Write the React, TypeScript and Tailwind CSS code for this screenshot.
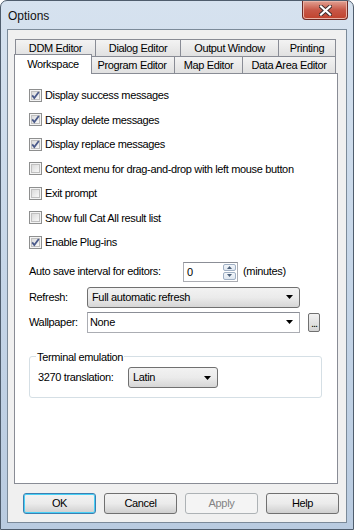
import React from "react";

const txt = "font-['Liberation_Sans',Arial,sans-serif] text-[11px] tracking-[-0.35px] text-black";

function CheckBox({ checked }: { checked: boolean }) {
  return (
    <svg width="13" height="13" viewBox="0 0 13 13" className="shrink-0">
      <defs>
        <linearGradient id="cbg" x1="0" y1="0" x2="1" y2="1">
          <stop offset="0" stopColor="#d9d9d9" />
          <stop offset="1" stopColor="#fafafa" />
        </linearGradient>
      </defs>
      <rect x="0.5" y="0.5" width="12" height="12" fill="#f4f4f4" stroke="#8e8f8f" />
      <rect x="2.5" y="2.5" width="8" height="8" fill="url(#cbg)" stroke="#c0c0c0" />
      {checked && (
        <path d="M3.2 6.4 L5.3 9 L9.8 3" fill="none" stroke="#4a5a8a" strokeWidth="1.8" />
      )}
    </svg>
  );
}

function Check({ label, checked }: { label: string; checked?: boolean }) {
  return (
    <div className="flex items-center h-[24.5px]">
      <CheckBox checked={!!checked} />
      <span className="ml-[3px]">{label}</span>
    </div>
  );
}

function Arrow() {
  return (
    <svg width="7" height="4" viewBox="0 0 7 4" className="shrink-0">
      <path d="M0 0 H7 L3.5 4 Z" fill="#000" />
    </svg>
  );
}

function DropList({ value, className }: { value: string; className: string }) {
  return (
    <div
      className={`flex items-center justify-between rounded-[3px] border border-[#707070] bg-gradient-to-b from-[#f2f2f2] via-[#ebebeb] to-[#d6d6d6] pl-[4px] pr-[6px] ${className}`}
    >
      <span>{value}</span>
      <Arrow />
    </div>
  );
}

function Button({ label, primary, disabled }: { label: string; primary?: boolean; disabled?: boolean }) {
  const border = primary
    ? "border-[#3c7fb1] shadow-[inset_0_0_0_1px_#48d0f6]"
    : disabled
    ? "border-[#adb2b5]"
    : "border-[#707070]";
  const bg = disabled
    ? "bg-[#f4f4f4] text-[#838383]"
    : "bg-gradient-to-b from-[#f2f2f2] via-[#ebebeb] to-[#cfcfcf]";
  return (
    <div
      className={`w-[73px] h-[21px] flex items-center justify-center rounded-[3px] border ${border} ${bg}`}
    >
      {label}
    </div>
  );
}

function Tab({ label, w }: { label: string; w: string }) {
  return (
    <div
      className={`${w} h-[17px] flex items-center justify-center border border-[#898c95] border-b-0 -ml-px first:ml-0 bg-gradient-to-b from-[#f3f3f3] to-[#e1e1e1]`}
    >
      {label}
    </div>
  );
}

export default function App() {
  return (
    <div className={`w-[354px] h-[530px] flex flex-col rounded-t-[7px] border border-[#4f5d6d] bg-gradient-to-b from-[#d6e2ef] via-[#c6d6e8] to-[#b9cbe0] px-[6px] pb-[6px] ${txt}`}>
      {/* title bar */}
      <div className="h-[28px] flex items-start justify-between shrink-0">
        <span className="mt-[6px] ml-[1px] text-[12px] tracking-normal text-[#111]">Options</span>
        <div className="w-[46px] h-[19px] -mr-[1px] flex items-center justify-center rounded-b-[4px] border border-t-0 border-[#6d2a25] bg-gradient-to-b from-[#e0a193] via-[#c75747] to-[#c0412c] shadow-[inset_0_0_0_1px_#eab3a6]">
          <svg width="13" height="11" viewBox="0 0 13 11">
            <path d="M2 1.5 L11 9.5 M11 1.5 L2 9.5" stroke="#3b2b2b" strokeWidth="4" strokeLinecap="square" />
            <path d="M2 1.5 L11 9.5 M11 1.5 L2 9.5" stroke="#fff" strokeWidth="2.2" strokeLinecap="square" />
          </svg>
        </div>
      </div>

      {/* client area */}
      <div className="flex-1 flex flex-col bg-[#f0f0f0] border border-[#7b8a99] px-[6px] pt-[9px] pb-[8px]">
        {/* tabs */}
        <div className="flex ml-[1px]">
          <Tab label="DDM Editor" w="w-[81px]" />
          <Tab label="Dialog Editor" w="w-[86px]" />
          <Tab label="Output Window" w="w-[99px]" />
          <Tab label="Printing" w="w-[58px]" />
        </div>
        <div className="flex items-end ml-0 h-[17px]">
          <div className="relative z-10 w-[78px] h-[20px] -mb-px -mr-[2px] flex items-center justify-center border border-[#898c95] border-b-0 bg-white pb-[1px]">
            Workspace
          </div>
          <Tab label="Program Editor" w="w-[86px]" />
          <Tab label="Map Editor" w="w-[69px]" />
          <Tab label="Data Area Editor" w="w-[94px]" />
        </div>

        {/* panel */}
        <div className="w-[324px] flex-1 flex flex-col bg-white border border-[#898c95] pl-[14px] pt-[9px]">
          <Check label="Display success messages" checked />
          <Check label="Display delete messages" checked />
          <Check label="Display replace messages" checked />
          <Check label="Context menu for drag-and-drop with left mouse button" />
          <Check label="Exit prompt" />
          <Check label="Show full Cat All result list" />
          <Check label="Enable Plug-ins" checked />

          <div className="flex items-center h-[22px] mt-[6px]">
            <span className="w-[154px]">Auto save interval for editors:</span>
            <div className="w-[55px] h-[20px] flex border border-[#abadb3] border-t-[#8b8e96] bg-white">
              <span className="flex-1 pl-[3px] leading-[18px]">0</span>
              <div className="w-[15px] flex flex-col gap-px p-px">
                <div className="flex-1 flex items-center justify-center rounded-[2px] border border-[#a0b0c4] bg-gradient-to-b from-[#f3f6fa] to-[#dfe7f1]">
                  <svg width="5" height="3" viewBox="0 0 5 3"><path d="M0 3 L2.5 0 L5 3 Z" fill="#4c607a" /></svg>
                </div>
                <div className="flex-1 flex items-center justify-center rounded-[2px] border border-[#a0b0c4] bg-gradient-to-b from-[#f3f6fa] to-[#dfe7f1]">
                  <svg width="5" height="3" viewBox="0 0 5 3"><path d="M0 0 H5 L2.5 3 Z" fill="#4c607a" /></svg>
                </div>
              </div>
            </div>
            <span className="ml-[5px]">(minutes)</span>
          </div>

          <div className="flex items-center mt-[4px] h-[21px]">
            <span className="w-[58px]">Refresh:</span>
            <DropList value="Full automatic refresh" className="w-[213px] h-[21px]" />
          </div>

          <div className="flex items-center mt-[4px] h-[21px]">
            <span className="w-[58px]">Wallpaper:</span>
            <div className="w-[213px] h-[21px] flex items-center justify-between border border-[#abadb3] border-t-[#8b8e96] bg-white pl-[2px] pr-[6px]">
              <span>None</span>
              <Arrow />
            </div>
            <div className="ml-[8px] w-[12px] h-[19px] flex items-end justify-center rounded-[2px] border border-[#707070] bg-gradient-to-b from-[#f2f2f2] to-[#d4d4d4] leading-[12px] pb-[2px] tracking-[-1px]">
              ...
            </div>
          </div>

          <fieldset className="mt-[16px] w-[293px] border border-[#d5dfe5] rounded-[3px] pl-[8px] pb-[9px] pt-[2px]">
            <legend className="px-[1px] -ml-[2px]">Terminal emulation</legend>
            <div className="flex items-center h-[21px]">
              <span className="w-[90px]">3270 translation:</span>
              <DropList value="Latin" className="w-[90px] h-[21px]" />
            </div>
          </fieldset>
        </div>

        {/* buttons */}
        <div className="flex gap-[8px] mt-[9px] pl-[9px]">
          <Button label="OK" primary />
          <Button label="Cancel" />
          <Button label="Apply" disabled />
          <Button label="Help" />
        </div>
      </div>
    </div>
  );
}
